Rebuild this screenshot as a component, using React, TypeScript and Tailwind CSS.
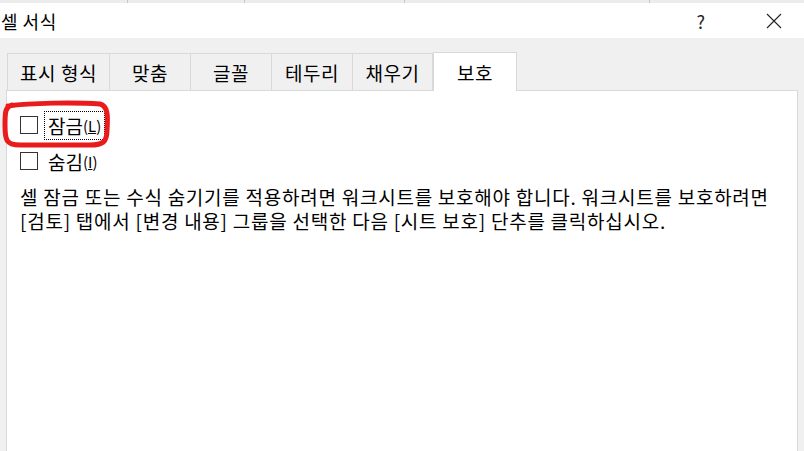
import React from "react";

const tabs = [
  { label: "표시 형식", w: "w-[103px]" },
  { label: "맞춤", w: "w-[81px]" },
  { label: "글꼴", w: "w-[81px]" },
  { label: "테두리", w: "w-[81px]" },
  { label: "채우기", w: "w-[80px]" },
];

export default function App() {
  return (
    <div className="relative w-[804px] h-[451px] overflow-hidden bg-[#f0f0f0] font-['Noto_Sans_CJK_KR',sans-serif] text-black">
      {/* top strip of underlying window */}
      <div className="flex h-[3px] bg-[#ececec]">
        <div className="w-[128px] border-r border-[#c8c8c8]" />
        <div className="w-[117px] border-r border-[#c8c8c8]" />
        <div className="w-[160px] border-r border-[#c8c8c8]" />
        <div className="w-[245px] border-r border-[#c8c8c8]" />
        <div className="flex-1" />
      </div>
      {/* title bar */}
      <div className="flex h-[35px] items-center bg-white">
        <div className="pl-[1px] text-[18px] leading-none tracking-[0.5px]">셀 서식</div>
        <div className="flex-1" />
        <div className="mr-[61px] text-[18px] leading-none text-[#222]">?</div>
        <svg width="16" height="16" viewBox="0 0 16 16" className="mr-[22px]">
          <path d="M1 1 L15 15 M15 1 L1 15" stroke="#222" strokeWidth="1.1" fill="none" />
        </svg>
      </div>
      {/* body */}
      <div className="flex flex-col px-[6px] pt-[14px]">
        <div className="flex h-[38px] items-end pl-[1px]">
          {tabs.map((t, i) => (
            <div
              key={t.label}
              className={`flex h-[37px] ${t.w} items-center justify-center border-t border-[#d9d9d9] ${i === 0 ? "border-l" : ""} border-r text-[19px] leading-none tracking-[0.6px]`}
            >
              {t.label}
            </div>
          ))}
          <div className="relative -mb-[1px] flex h-[39px] w-[84px] items-center justify-center border border-b-0 border-[#d9d9d9] bg-white pt-[1px] text-[19px] leading-none tracking-[0.6px] z-10">
            보호
          </div>
        </div>
        <div className="h-[400px] border border-[#d9d9d9] bg-white pt-[20px] pl-[13px] pr-[8px]">
          <div className="flex items-center h-[28px]">
            <div className="h-[18px] w-[18px] shrink-0 border border-[#333] bg-white" />
            <div className="ml-[6px] border border-dotted border-black px-[3px] h-[29px] flex items-center">
              <span className="text-[19px] leading-none">잠금</span>
              <span className="text-[15px] leading-none">(<span className="underline">L</span>)</span>
            </div>
          </div>
          <div className="mt-[8px] flex items-center h-[28px]">
            <div className="h-[18px] w-[18px] shrink-0 border border-[#333] bg-white" />
            <div className="ml-[10px] flex items-center">
              <span className="text-[19px] leading-none">숨김</span>
              <span className="text-[15px] leading-none">(<span className="underline">I</span>)</span>
            </div>
          </div>
          <p className="mt-[10px] text-[19px] leading-[24px] tracking-[0.75px]">
            셀 잠금 또는 수식 숨기기를 적용하려면 워크시트를 보호해야 합니다. 워크시트를 보호하려면 [검토] 탭에서 [변경 내용] 그룹을 선택한 다음 [시트 보호] 단추를 클릭하십시오.
          </p>
        </div>
      </div>
      {/* red annotation */}
      <svg className="pointer-events-none absolute left-0 top-0" width="804" height="451">
        <path
          d="M8 106 C30 103 75 102 100 104 C108 106 108 116 107 130 C107 142 103 145 90 145 L20 145 C6 145 5 140 5 125 C5 113 5 107 12 105"
          stroke="#e81c1c"
          strokeWidth="5"
          fill="none"
          strokeLinecap="round"
        />
      </svg>
    </div>
  );
}
